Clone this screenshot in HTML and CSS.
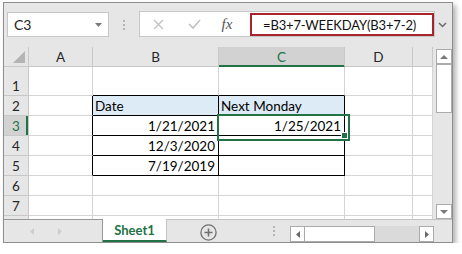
FILE: index.html
```html
<!DOCTYPE html>
<html lang="en">
<head>
    <meta charset="UTF-8">
    <title>Next Monday - Excel</title>
    <link rel="stylesheet" href="styles.css">
</head>
<body>
    <div class="window">
        <!-- formula bar -->
        <div class="formula-bar">
            <div class="name-box">
                <span>C3</span>
                <svg width="7" height="4" viewBox="0 0 7 4"><path d="M0 0h7L3.5 4z" fill="#7a7a7a"/></svg>
            </div>
            <div class="grip"><i></i><i></i><i></i></div>
            <div class="formula-box">
                <div class="fx-buttons">
                    <span class="slot"><svg width="11" height="11" viewBox="0 0 11 11"><path d="M1 1l9 9M10 1l-9 9" stroke="#c2c2c2" stroke-width="1.4"/></svg></span>
                    <span class="slot"><svg width="13" height="10" viewBox="0 0 13 10"><path d="M1 5l4 4 7-8" stroke="#c2c2c2" stroke-width="1.7" fill="none"/></svg></span>
                    <span class="slot fx">fx</span>
                </div>
                <div class="formula-input">=B3+7-WEEKDAY(B3+7-2)</div>
            </div>
            <svg class="chevron" width="9" height="6" viewBox="0 0 9 6"><path d="M1 1l3.5 3.5L8 1" stroke="#6a6a6a" stroke-width="1.5" fill="none"/></svg>
        </div>

        <!-- sheet -->
        <div class="sheet-area">
            <div class="sheet">
                <div class="c h corner"><svg width="12" height="12" viewBox="0 0 12 12"><path d="M12 0V12H0z" fill="#b4b4b4"/></svg></div>
                <div class="c h">A</div>
                <div class="c h">B</div>
                <div class="c h csel">C</div>
                <div class="c h">D</div>
                <div class="c h"></div>

                <div class="c h rh">1</div>
                <div class="c"></div>
                <div class="c edge-b"></div>
                <div class="c edge-b"></div>
                <div class="c"></div>
                <div class="c"></div>

                <div class="c h rh">2</div>
                <div class="c edge-r"></div>
                <div class="c tbl fill">Date</div>
                <div class="c tbl fill">Next Monday</div>
                <div class="c"></div>
                <div class="c"></div>

                <div class="c h rh rsel">3</div>
                <div class="c edge-r"></div>
                <div class="c tbl num">1/21/2021</div>
                <div class="c tbl num sel">1/25/2021</div>
                <div class="c"></div>
                <div class="c"></div>

                <div class="c h rh">4</div>
                <div class="c edge-r"></div>
                <div class="c tbl num">12/3/2020</div>
                <div class="c tbl"></div>
                <div class="c"></div>
                <div class="c"></div>

                <div class="c h rh">5</div>
                <div class="c edge-r"></div>
                <div class="c tbl num">7/19/2019</div>
                <div class="c tbl"></div>
                <div class="c"></div>
                <div class="c"></div>

                <div class="c h rh">6</div>
                <div class="c"></div>
                <div class="c"></div>
                <div class="c"></div>
                <div class="c"></div>
                <div class="c"></div>

                <div class="c h rh">7</div>
                <div class="c"></div>
                <div class="c"></div>
                <div class="c"></div>
                <div class="c"></div>
                <div class="c"></div>

                <div class="c h part"></div>
                <div class="c part"></div>
                <div class="c part"></div>
                <div class="c part"></div>
                <div class="c part"></div>
                <div class="c part"></div>
            </div>
            <div class="vscroll">
                <div class="sbtn"><svg width="8" height="4" viewBox="0 0 8 4"><path d="M0 4h8L4 0z" fill="#7a7a7a"/></svg></div>
                <div class="vthumb"></div>
                <div class="vtrack"></div>
                <div class="sbtn"><svg width="8" height="4" viewBox="0 0 8 4"><path d="M0 0h8L4 4z" fill="#7a7a7a"/></svg></div>
            </div>
        </div>

        <!-- sheet tabs -->
        <div class="tab-bar">
            <div class="tab-nav">
                <svg width="4" height="7" viewBox="0 0 4 7"><path d="M4 0v7L0 3.5z" fill="#cdcdcd"/></svg>
                <svg width="4" height="7" viewBox="0 0 4 7"><path d="M0 0v7l4-3.5z" fill="#cdcdcd"/></svg>
            </div>
            <div class="tab">Sheet1</div>
            <div class="tab-rest">
                <svg class="add" width="17" height="17" viewBox="0 0 17 17"><circle cx="8.5" cy="8.5" r="7.6" fill="none" stroke="#707070" stroke-width="1.3"/><path d="M8.5 4.5v8M4.5 8.5h8" stroke="#707070" stroke-width="1.6"/></svg>
                <div class="grip small"><i></i><i></i><i></i></div>
                <div class="hscroll">
                    <div class="hbtn"><svg width="4" height="7" viewBox="0 0 4 7"><path d="M4 0v7L0 3.5z" fill="#6a6a6a"/></svg></div>
                    <div class="hthumb"></div>
                    <div class="htrack"></div>
                    <div class="hbtn"><svg width="4" height="7" viewBox="0 0 4 7"><path d="M0 0v7l4-3.5z" fill="#6a6a6a"/></svg></div>
                </div>
            </div>
        </div>
    </div>
</body>
</html>
```

FILE: styles.css
```css
* {
    box-sizing: border-box;
}
body {
    margin: 0;
    background: #fff;
    font-family: Lato, "Noto Sans", sans-serif;
}
.window {
    margin: 2px 0 0 3px;
    width: 450px;
    height: 241px;
    border: 1px solid #8e8e8e;
    background: #e6e6e6;
    display: flex;
    flex-direction: column;
    box-shadow: 3px 3px 5px rgba(0,0,0,0.3);
}

/* formula bar */
.formula-bar {
    flex: none;
    height: 44px;
    display: flex;
    align-items: flex-start;
    padding: 9px 0 0 3px;
}
.name-box {
    width: 102px;
    height: 25px;
    background: #fff;
    border: 1px solid #c6c6c6;
    display: flex;
    align-items: center;
    justify-content: space-between;
    padding: 0 6px;
    font-size: 14px;
    color: #222;
}
.grip {
    width: 30px;
    height: 25px;
    display: flex;
    flex-direction: column;
    align-items: center;
    justify-content: center;
    gap: 2px;
}
.grip i {
    width: 2px;
    height: 2px;
    background: #b5b5b5;
}
.formula-box {
    margin-top: -1px;
    width: 296px;
    height: 26px;
    background: #fff;
    border: 1px solid #c6c6c6;
    display: flex;
}
.fx-buttons {
    width: 110px;
    display: flex;
    align-items: center;
}
.slot {
    width: 36px;
    display: flex;
    justify-content: center;
}
.slot.fx {
    width: 30px;
    font-family: "Liberation Serif", serif;
    font-style: italic;
    font-size: 15px;
    color: #555;
}
.formula-input {
    flex: 1;
    margin-top: 1px;
    border: 2px solid #a8232b;
    display: flex;
    align-items: center;
    padding-left: 11px;
    font-size: 13px;
    letter-spacing: -0.15px;
    color: #111;
}
.chevron {
    margin: 10px 0 0 3px;
}

/* grid */
.sheet-area {
    flex: none;
    height: 172px;
    display: flex;
}
.sheet {
    width: 429px;
    background: #fff;
    display: grid;
    grid-template-columns: 25px 64px 126px 126px 68px 20px;
    grid-template-rows: 20px 29px repeat(6, 20px) 3px;
    overflow: hidden;
}
.c {
    border-right: 1px solid #d4d4d4;
    border-bottom: 1px solid #d4d4d4;
    display: flex;
    align-items: flex-end;
    padding: 0 3px 1px 2px;
    font-size: 13.5px;
    color: #000;
    white-space: nowrap;
}
.h {
    background: #e6e6e6;
    border-color: #c8c8c8;
    justify-content: center;
    align-items: center;
    padding: 0;
    color: #262626;
}
.rh {
    align-items: flex-end;
    padding-bottom: 1px;
}
.corner {
    justify-content: flex-end;
    align-items: flex-end;
    padding: 0 3px 3px 0;
}
.csel {
    background: #d2d2d2;
    color: #217346;
    border-bottom-color: #217346;
    box-shadow: inset 0 -1px #217346;
}
.rsel {
    background: #d2d2d2;
    color: #217346;
    box-shadow: inset -2px 0 #217346;
}
.part {
    border-bottom: none;
}
.tbl {
    border-right-color: #000;
    border-bottom-color: #000;
}
.edge-r {
    border-right-color: #000;
}
.edge-b {
    border-bottom-color: #000;
}
.fill {
    background: #ddebf7;
}
.num {
    justify-content: flex-end;
}
.sel {
    position: relative;
}
.sel::after {
    content: "";
    position: absolute;
    left: -2px;
    top: -2px;
    width: 129px;
    height: 23px;
    border: 2px solid #217346;
}
.sel::before {
    content: "";
    position: absolute;
    left: 123px;
    top: 17px;
    width: 5px;
    height: 5px;
    background: #217346;
    box-shadow: 0 0 0 1px #fff;
    z-index: 1;
}

/* vertical scrollbar */
.vscroll {
    flex: 1;
    display: flex;
    flex-direction: column;
    padding: 2px 0 0 3px;
}
.sbtn {
    height: 15px;
    background: #fff;
    border: 1px solid #ababab;
    display: flex;
    align-items: center;
    justify-content: center;
}
.vthumb {
    height: 49px;
    background: #fff;
    border: 1px solid #ababab;
}
.vtrack {
    flex: 1;
}

/* sheet tabs */
.tab-bar {
    flex: 1;
    display: flex;
}
.tab-nav {
    width: 99px;
    border-top: 1px solid #979797;
    border-right: 1px solid #979797;
    display: flex;
    align-items: center;
    padding-left: 26px;
    gap: 24px;
}
.tab {
    width: 64px;
    background: #fff;
    border-right: 1px solid #c3c3c3;
    border-bottom: 2px solid #217346;
    display: flex;
    align-items: center;
    justify-content: center;
    font-size: 13px;
    font-weight: bold;
    color: #217346;
}
.tab-rest {
    flex: 1;
    border-top: 1px solid #c3c3c3;
    display: flex;
    align-items: center;
}
.add {
    margin-left: 33px;
    margin-top: 3px;
}
.grip.small {
    width: auto;
    margin-left: 56px;
    height: auto;
}
.hscroll {
    align-self: flex-end;
    height: 16px;
    margin-left: 15px;
    display: flex;
}
.hbtn {
    width: 15px;
    background: #fff;
    border: 1px solid #ababab;
    display: flex;
    align-items: center;
    justify-content: center;
}
.hthumb {
    width: 71px;
    margin-left: -1px;
    background: #fff;
    border: 1px solid #ababab;
}
.htrack {
    width: 44px;
    background: #dadada;
}
```
